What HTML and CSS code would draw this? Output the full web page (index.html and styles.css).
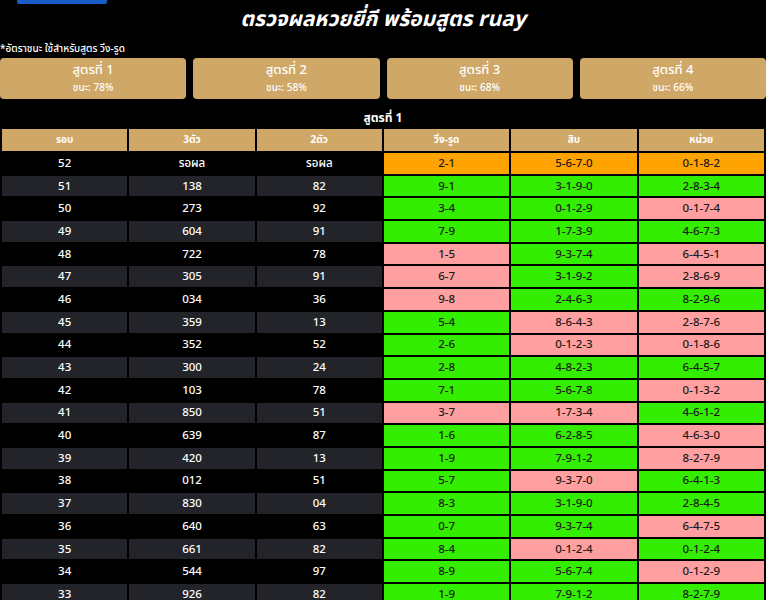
FILE: index.html
```html
<!DOCTYPE html>
<html lang="th">
<head>
<meta charset="utf-8">
<title>ตรวจผลหวยยี่กี พร้อมสูตร ruay</title>
<link rel="stylesheet" href="styles.css">
</head>
<body>
<div class="topbar"><div class="logo-strip"></div></div>
<h1 class="title">ตรวจผลหวยยี่กี พร้อมสูตร ruay</h1>
<p class="note">*อัตราชนะ ใช้สำหรับสูตร วิ่ง-รูด</p>
<div class="formulas">
  <div class="fbtn"><span class="fname">สูตรที่ 1</span><span class="frate">ชนะ: 78%</span></div>
  <div class="fbtn"><span class="fname">สูตรที่ 2</span><span class="frate">ชนะ: 58%</span></div>
  <div class="fbtn"><span class="fname">สูตรที่ 3</span><span class="frate">ชนะ: 68%</span></div>
  <div class="fbtn"><span class="fname">สูตรที่ 4</span><span class="frate">ชนะ: 66%</span></div>
</div>
<h2 class="subtitle">สูตรที่ 1</h2>
<table class="results">
<thead>
<tr><th>รอบ</th><th>3ตัว</th><th>2ตัว</th><th>วิ่ง-รูด</th><th>สิบ</th><th>หน่วย</th></tr>
</thead>
<tbody>
<tr><td>52</td><td>รอผล</td><td>รอผล</td><td class="w">2-1</td><td class="w">5-6-7-0</td><td class="w">0-1-8-2</td></tr>
<tr><td>51</td><td>138</td><td>82</td><td class="g">9-1</td><td class="g">3-1-9-0</td><td class="g">2-8-3-4</td></tr>
<tr><td>50</td><td>273</td><td>92</td><td class="g">3-4</td><td class="g">0-1-2-9</td><td class="p">0-1-7-4</td></tr>
<tr><td>49</td><td>604</td><td>91</td><td class="g">7-9</td><td class="g">1-7-3-9</td><td class="g">4-6-7-3</td></tr>
<tr><td>48</td><td>722</td><td>78</td><td class="p">1-5</td><td class="g">9-3-7-4</td><td class="p">6-4-5-1</td></tr>
<tr><td>47</td><td>305</td><td>91</td><td class="p">6-7</td><td class="g">3-1-9-2</td><td class="p">2-8-6-9</td></tr>
<tr><td>46</td><td>034</td><td>36</td><td class="p">9-8</td><td class="g">2-4-6-3</td><td class="g">8-2-9-6</td></tr>
<tr><td>45</td><td>359</td><td>13</td><td class="g">5-4</td><td class="p">8-6-4-3</td><td class="p">2-8-7-6</td></tr>
<tr><td>44</td><td>352</td><td>52</td><td class="g">2-6</td><td class="p">0-1-2-3</td><td class="p">0-1-8-6</td></tr>
<tr><td>43</td><td>300</td><td>24</td><td class="g">2-8</td><td class="g">4-8-2-3</td><td class="g">6-4-5-7</td></tr>
<tr><td>42</td><td>103</td><td>78</td><td class="g">7-1</td><td class="g">5-6-7-8</td><td class="p">0-1-3-2</td></tr>
<tr><td>41</td><td>850</td><td>51</td><td class="p">3-7</td><td class="p">1-7-3-4</td><td class="g">4-6-1-2</td></tr>
<tr><td>40</td><td>639</td><td>87</td><td class="g">1-6</td><td class="g">6-2-8-5</td><td class="p">4-6-3-0</td></tr>
<tr><td>39</td><td>420</td><td>13</td><td class="g">1-9</td><td class="g">7-9-1-2</td><td class="p">8-2-7-9</td></tr>
<tr><td>38</td><td>012</td><td>51</td><td class="g">5-7</td><td class="p">9-3-7-0</td><td class="g">6-4-1-3</td></tr>
<tr><td>37</td><td>830</td><td>04</td><td class="g">8-3</td><td class="g">3-1-9-0</td><td class="g">2-8-4-5</td></tr>
<tr><td>36</td><td>640</td><td>63</td><td class="g">0-7</td><td class="g">9-3-7-4</td><td class="p">6-4-7-5</td></tr>
<tr><td>35</td><td>661</td><td>82</td><td class="g">8-4</td><td class="p">0-1-2-4</td><td class="g">0-1-2-4</td></tr>
<tr><td>34</td><td>544</td><td>97</td><td class="g">8-9</td><td class="g">5-6-7-4</td><td class="p">0-1-2-9</td></tr>
<tr><td>33</td><td>926</td><td>82</td><td class="g">1-9</td><td class="g">7-9-1-2</td><td class="g">8-2-7-9</td></tr>
</tbody>
</table>
</body>
</html>
```
FILE: styles.css
```css
html, body {
  margin: 0;
  padding: 0;
  background: #000;
  color: #fff;
  font-family: "Noto Sans Thai", "Noto Sans", "DejaVu Sans", sans-serif;
}
.topbar {
  height: 4px;
  padding-left: 17px;
}
.logo-strip {
  width: 90px;
  height: 4px;
  background: #1a5cc8;
  border-radius: 0 0 2px 2px;
}
.title {
  margin: 2px 0 0;
  text-align: center;
  font-size: 21px;
  font-weight: 700;
  font-style: italic;
  line-height: 28px;
}
.note {
  margin: 8px 0 0;
  font-size: 10px;
  font-weight: 500;
  line-height: 14px;
}
.formulas {
  display: flex;
  gap: 7px;
  margin-top: 2px;
}
.fbtn {
  flex: 1;
  height: 41px;
  background: #cfa767;
  border-radius: 4px;
  display: flex;
  flex-direction: column;
  align-items: center;
  justify-content: center;
}
.fname {
  font-size: 13px;
  font-weight: 500;
  line-height: 17px;
}
.frate {
  margin-top: 3px;
  font-size: 10px;
  font-weight: 500;
  line-height: 13px;
}
.subtitle {
  margin: 9px 0 0;
  text-align: center;
  font-size: 12px;
  font-weight: 700;
  line-height: 20px;
}
.results {
  width: 100%;
  border-collapse: separate;
  border-spacing: 2px;
  table-layout: fixed;
  margin-top: -1px;
}
.results th {
  background: #cfa767;
  color: #fff;
  font-size: 10px;
  font-weight: 700;
  height: 22px;
  padding: 0;
}
.results td {
  height: 20.7px;
  padding: 0;
  text-align: center;
  font-size: 11.5px;
  font-weight: 500;
  color: #fff;
}
.results tbody tr:nth-child(even) td {
  background: #222429;
}
.results td.g {
  background: #33ee00 !important;
  color: #1a1a1a;
}
.results td.p {
  background: #ff9f9f !important;
  color: #1a1a1a;
}
.results td.w {
  background: #ffa300 !important;
  color: #1a1a1a;
}
```
